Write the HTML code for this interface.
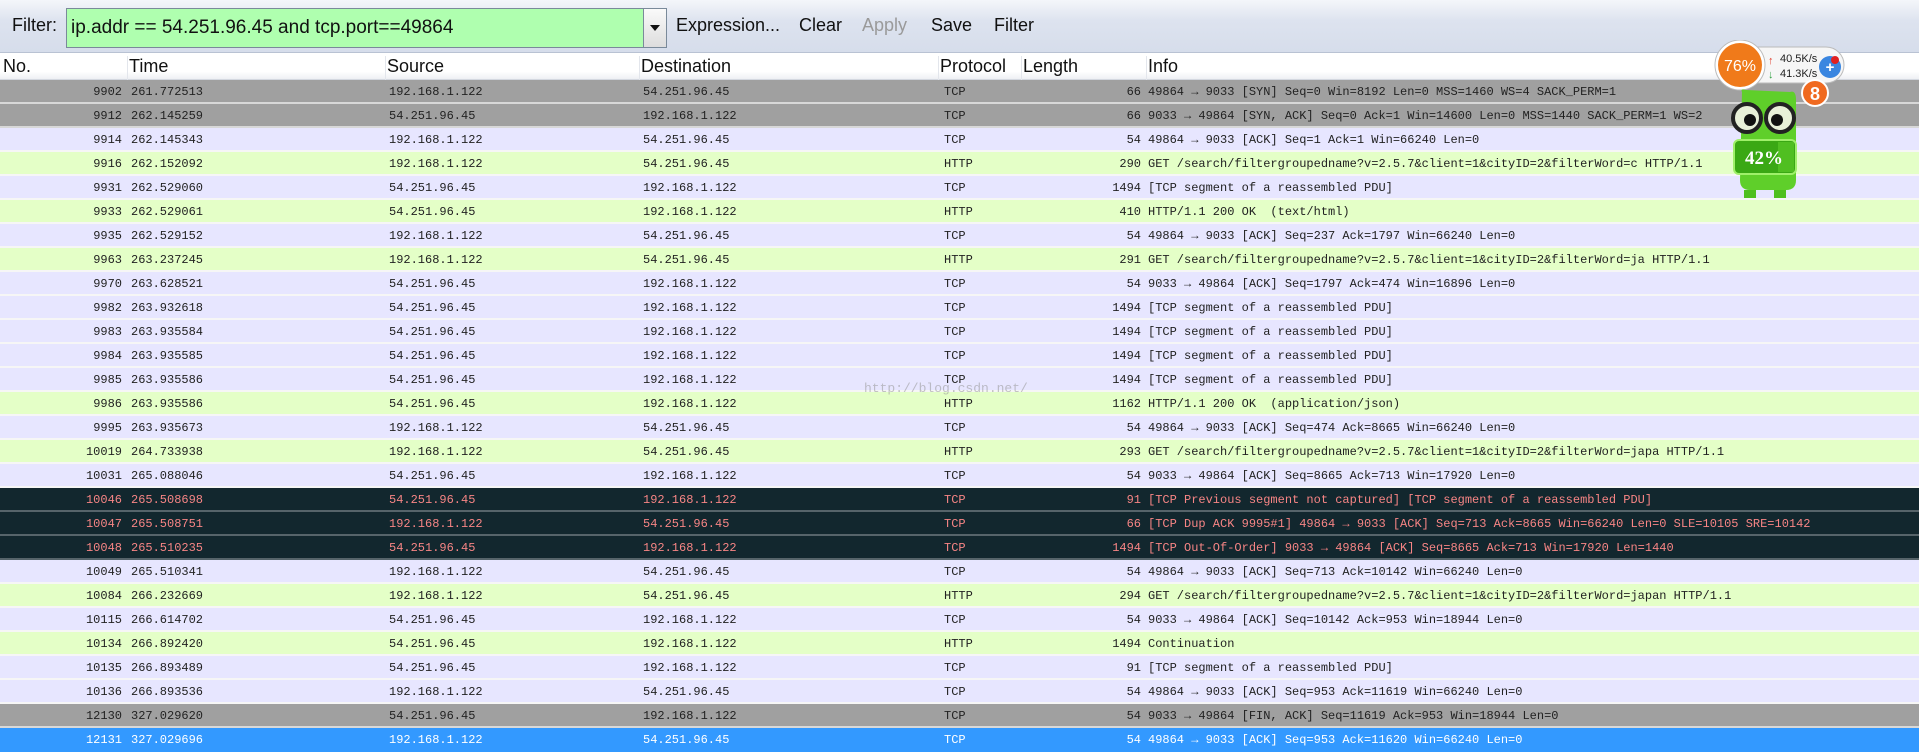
<!DOCTYPE html>
<html><head><meta charset="utf-8"><style>
*{margin:0;padding:0;box-sizing:border-box}
body{width:1919px;height:756px;overflow:hidden;background:#fff;position:relative;font-family:"Liberation Sans",sans-serif}
#tb{position:absolute;left:0;top:0;width:1919px;height:53px;background:linear-gradient(#f4f6fa,#dde3ef 40%,#d6ddeb);border-bottom:1px solid #b9c2d3}
#tb span{position:absolute;top:15px;font-size:18px;color:#111}
#fb{position:absolute;left:66px;top:8px;width:578px;height:40px;background:#afffaf;border:1px solid #7a8a9a;font-size:19px;padding:8px 0 0 4px;color:#111}
#dd{position:absolute;left:643px;top:8px;width:24px;height:40px;background:linear-gradient(#fafafa,#ddd);border:1px solid #7a8a9a}
#dd:after{content:"";position:absolute;left:6px;top:16px;border-left:5px solid transparent;border-right:5px solid transparent;border-top:6px solid #111}
#hd{position:absolute;left:0;top:54px;width:1919px;height:26px;background:linear-gradient(#fff,#fff 70%,#eef0f4);border-bottom:1px solid #d4d8e0}
#hd span{position:absolute;top:2px;font-size:18px;color:#111;height:24px;border-left:1px solid #e3e6ec;padding-left:1px}
#rows{position:absolute;left:0;top:80px;width:1919px}
.r{position:relative;height:24px;border-bottom:2px solid #f6f6f6;font-family:"Liberation Mono",monospace;font-size:12px;color:#222}
.r span{position:absolute;top:5px;white-space:pre}
.n{right:1797px;text-align:right}.t{left:131px}.s{left:389px}.d{left:643px}.p{left:944px}.l{right:778px}.i{left:1148px}
.g{background:#a0a0a0;border-bottom-color:#d8d8d8}.v{background:#e7e6ff}.h{background:#e4ffc7}
.k{background:#12272e;color:#f78585;border-bottom-color:#56646a}.b{background:#3399ff;color:#fff;border-bottom-color:#3399ff}
#wm{position:absolute;left:864px;top:381px;font-family:"Liberation Mono",monospace;font-size:13px;color:rgba(150,150,150,.55)}
</style></head><body>
<div id="tb"><span style="left:12px">Filter:</span><div id="fb">ip.addr == 54.251.96.45 and tcp.port==49864</div><div id="dd"></div>
<span style="left:676px">Expression...</span><span style="left:799px">Clear</span><span style="left:862px;color:#9a9a9a">Apply</span><span style="left:931px">Save</span><span style="left:994px">Filter</span></div>
<div id="hd"><span style="left:2px;border:0">No.</span><span style="left:127px">Time</span><span style="left:385px">Source</span><span style="left:639px">Destination</span><span style="left:938px">Protocol</span><span style="left:1021px">Length</span><span style="left:1146px">Info</span></div>
<div id="rows">
<div class="r g"><span class="n">9902</span><span class="t">261.772513</span><span class="s">192.168.1.122</span><span class="d">54.251.96.45</span><span class="p">TCP</span><span class="l">66</span><span class="i">49864 → 9033 [SYN] Seq=0 Win=8192 Len=0 MSS=1460 WS=4 SACK_PERM=1</span></div>
<div class="r g"><span class="n">9912</span><span class="t">262.145259</span><span class="s">54.251.96.45</span><span class="d">192.168.1.122</span><span class="p">TCP</span><span class="l">66</span><span class="i">9033 → 49864 [SYN, ACK] Seq=0 Ack=1 Win=14600 Len=0 MSS=1440 SACK_PERM=1 WS=2</span></div>
<div class="r v"><span class="n">9914</span><span class="t">262.145343</span><span class="s">192.168.1.122</span><span class="d">54.251.96.45</span><span class="p">TCP</span><span class="l">54</span><span class="i">49864 → 9033 [ACK] Seq=1 Ack=1 Win=66240 Len=0</span></div>
<div class="r h"><span class="n">9916</span><span class="t">262.152092</span><span class="s">192.168.1.122</span><span class="d">54.251.96.45</span><span class="p">HTTP</span><span class="l">290</span><span class="i">GET /search/filtergroupedname?v=2.5.7&amp;client=1&amp;cityID=2&amp;filterWord=c HTTP/1.1</span></div>
<div class="r v"><span class="n">9931</span><span class="t">262.529060</span><span class="s">54.251.96.45</span><span class="d">192.168.1.122</span><span class="p">TCP</span><span class="l">1494</span><span class="i">[TCP segment of a reassembled PDU]</span></div>
<div class="r h"><span class="n">9933</span><span class="t">262.529061</span><span class="s">54.251.96.45</span><span class="d">192.168.1.122</span><span class="p">HTTP</span><span class="l">410</span><span class="i">HTTP/1.1 200 OK  (text/html)</span></div>
<div class="r v"><span class="n">9935</span><span class="t">262.529152</span><span class="s">192.168.1.122</span><span class="d">54.251.96.45</span><span class="p">TCP</span><span class="l">54</span><span class="i">49864 → 9033 [ACK] Seq=237 Ack=1797 Win=66240 Len=0</span></div>
<div class="r h"><span class="n">9963</span><span class="t">263.237245</span><span class="s">192.168.1.122</span><span class="d">54.251.96.45</span><span class="p">HTTP</span><span class="l">291</span><span class="i">GET /search/filtergroupedname?v=2.5.7&amp;client=1&amp;cityID=2&amp;filterWord=ja HTTP/1.1</span></div>
<div class="r v"><span class="n">9970</span><span class="t">263.628521</span><span class="s">54.251.96.45</span><span class="d">192.168.1.122</span><span class="p">TCP</span><span class="l">54</span><span class="i">9033 → 49864 [ACK] Seq=1797 Ack=474 Win=16896 Len=0</span></div>
<div class="r v"><span class="n">9982</span><span class="t">263.932618</span><span class="s">54.251.96.45</span><span class="d">192.168.1.122</span><span class="p">TCP</span><span class="l">1494</span><span class="i">[TCP segment of a reassembled PDU]</span></div>
<div class="r v"><span class="n">9983</span><span class="t">263.935584</span><span class="s">54.251.96.45</span><span class="d">192.168.1.122</span><span class="p">TCP</span><span class="l">1494</span><span class="i">[TCP segment of a reassembled PDU]</span></div>
<div class="r v"><span class="n">9984</span><span class="t">263.935585</span><span class="s">54.251.96.45</span><span class="d">192.168.1.122</span><span class="p">TCP</span><span class="l">1494</span><span class="i">[TCP segment of a reassembled PDU]</span></div>
<div class="r v"><span class="n">9985</span><span class="t">263.935586</span><span class="s">54.251.96.45</span><span class="d">192.168.1.122</span><span class="p">TCP</span><span class="l">1494</span><span class="i">[TCP segment of a reassembled PDU]</span></div>
<div class="r h"><span class="n">9986</span><span class="t">263.935586</span><span class="s">54.251.96.45</span><span class="d">192.168.1.122</span><span class="p">HTTP</span><span class="l">1162</span><span class="i">HTTP/1.1 200 OK  (application/json)</span></div>
<div class="r v"><span class="n">9995</span><span class="t">263.935673</span><span class="s">192.168.1.122</span><span class="d">54.251.96.45</span><span class="p">TCP</span><span class="l">54</span><span class="i">49864 → 9033 [ACK] Seq=474 Ack=8665 Win=66240 Len=0</span></div>
<div class="r h"><span class="n">10019</span><span class="t">264.733938</span><span class="s">192.168.1.122</span><span class="d">54.251.96.45</span><span class="p">HTTP</span><span class="l">293</span><span class="i">GET /search/filtergroupedname?v=2.5.7&amp;client=1&amp;cityID=2&amp;filterWord=japa HTTP/1.1</span></div>
<div class="r v"><span class="n">10031</span><span class="t">265.088046</span><span class="s">54.251.96.45</span><span class="d">192.168.1.122</span><span class="p">TCP</span><span class="l">54</span><span class="i">9033 → 49864 [ACK] Seq=8665 Ack=713 Win=17920 Len=0</span></div>
<div class="r k"><span class="n">10046</span><span class="t">265.508698</span><span class="s">54.251.96.45</span><span class="d">192.168.1.122</span><span class="p">TCP</span><span class="l">91</span><span class="i">[TCP Previous segment not captured] [TCP segment of a reassembled PDU]</span></div>
<div class="r k"><span class="n">10047</span><span class="t">265.508751</span><span class="s">192.168.1.122</span><span class="d">54.251.96.45</span><span class="p">TCP</span><span class="l">66</span><span class="i">[TCP Dup ACK 9995#1] 49864 → 9033 [ACK] Seq=713 Ack=8665 Win=66240 Len=0 SLE=10105 SRE=10142</span></div>
<div class="r k"><span class="n">10048</span><span class="t">265.510235</span><span class="s">54.251.96.45</span><span class="d">192.168.1.122</span><span class="p">TCP</span><span class="l">1494</span><span class="i">[TCP Out-Of-Order] 9033 → 49864 [ACK] Seq=8665 Ack=713 Win=17920 Len=1440</span></div>
<div class="r v"><span class="n">10049</span><span class="t">265.510341</span><span class="s">192.168.1.122</span><span class="d">54.251.96.45</span><span class="p">TCP</span><span class="l">54</span><span class="i">49864 → 9033 [ACK] Seq=713 Ack=10142 Win=66240 Len=0</span></div>
<div class="r h"><span class="n">10084</span><span class="t">266.232669</span><span class="s">192.168.1.122</span><span class="d">54.251.96.45</span><span class="p">HTTP</span><span class="l">294</span><span class="i">GET /search/filtergroupedname?v=2.5.7&amp;client=1&amp;cityID=2&amp;filterWord=japan HTTP/1.1</span></div>
<div class="r v"><span class="n">10115</span><span class="t">266.614702</span><span class="s">54.251.96.45</span><span class="d">192.168.1.122</span><span class="p">TCP</span><span class="l">54</span><span class="i">9033 → 49864 [ACK] Seq=10142 Ack=953 Win=18944 Len=0</span></div>
<div class="r h"><span class="n">10134</span><span class="t">266.892420</span><span class="s">54.251.96.45</span><span class="d">192.168.1.122</span><span class="p">HTTP</span><span class="l">1494</span><span class="i">Continuation</span></div>
<div class="r v"><span class="n">10135</span><span class="t">266.893489</span><span class="s">54.251.96.45</span><span class="d">192.168.1.122</span><span class="p">TCP</span><span class="l">91</span><span class="i">[TCP segment of a reassembled PDU]</span></div>
<div class="r v"><span class="n">10136</span><span class="t">266.893536</span><span class="s">192.168.1.122</span><span class="d">54.251.96.45</span><span class="p">TCP</span><span class="l">54</span><span class="i">49864 → 9033 [ACK] Seq=953 Ack=11619 Win=66240 Len=0</span></div>
<div class="r g"><span class="n">12130</span><span class="t">327.029620</span><span class="s">54.251.96.45</span><span class="d">192.168.1.122</span><span class="p">TCP</span><span class="l">54</span><span class="i">9033 → 49864 [FIN, ACK] Seq=11619 Ack=953 Win=18944 Len=0</span></div>
<div class="r b"><span class="n">12131</span><span class="t">327.029696</span><span class="s">192.168.1.122</span><span class="d">54.251.96.45</span><span class="p">TCP</span><span class="l">54</span><span class="i">49864 → 9033 [ACK] Seq=953 Ack=11620 Win=66240 Len=0</span></div>
</div>
<div id="wm">http://blog.csdn.net/</div>
<svg style="position:absolute;left:1700px;top:40px" width="160" height="160" viewBox="0 0 160 160">
<rect x="22" y="7" width="122" height="36" rx="18" fill="#f6f6f6" stroke="#bbb"/>
<circle cx="40" cy="25" r="25" fill="#fff" stroke="#bbb"/>
<circle cx="40" cy="25" r="22" fill="#f07a1a"/>
<text x="40" y="31" font-family="Liberation Sans" font-size="16" fill="#fff" text-anchor="middle">76%</text>
<text x="68" y="24" font-family="Liberation Sans" font-size="11" fill="#e04030">↑</text>
<text x="68" y="38" font-family="Liberation Sans" font-size="11" fill="#30a040">↓</text>
<text x="80" y="22" font-family="Liberation Sans" font-size="11" fill="#222">40.5K/s</text>
<text x="80" y="37" font-family="Liberation Sans" font-size="11" fill="#222">41.3K/s</text>
<circle cx="130" cy="27" r="11" fill="#3a86e0"/>
<text x="130" y="32" font-family="Liberation Sans" font-size="15" font-weight="bold" fill="#fff" text-anchor="middle">+</text>
<circle cx="135" cy="20" r="4" fill="#e02020"/>
<circle cx="115" cy="53" r="13" fill="#f06a20" stroke="#fff" stroke-width="2"/>
<text x="115" y="60" font-family="Liberation Sans" font-size="18" font-weight="bold" fill="#fff" text-anchor="middle">8</text>
<path d="M42 52 Q40 48 46 50 L90 52 Q96 50 96 60 L96 140 Q96 150 86 150 L50 150 Q40 150 40 140 Z" fill="#5fcf2a"/>
<rect x="34" y="100" width="62" height="34" rx="5" fill="#3aa814" stroke="#9ff06a" stroke-width="2"/>
<rect x="78" y="102" width="16" height="30" fill="#5fcf2a" opacity=".6"/>
<text x="64" y="124" font-family="Liberation Serif" font-size="19" font-weight="bold" fill="#fff" text-anchor="middle">42%</text>
<circle cx="47" cy="78" r="14" fill="#e8f0d8" stroke="#222" stroke-width="4"/>
<circle cx="80" cy="78" r="14" fill="#e8f0d8" stroke="#222" stroke-width="4"/>
<circle cx="50" cy="80" r="6" fill="#111"/><circle cx="77" cy="80" r="6" fill="#111"/>
<path d="M44 150 L44 158 L56 158 L56 150 M74 150 L74 158 L86 158 L86 150" fill="#4fbf20"/>
</svg>
</body></html>
